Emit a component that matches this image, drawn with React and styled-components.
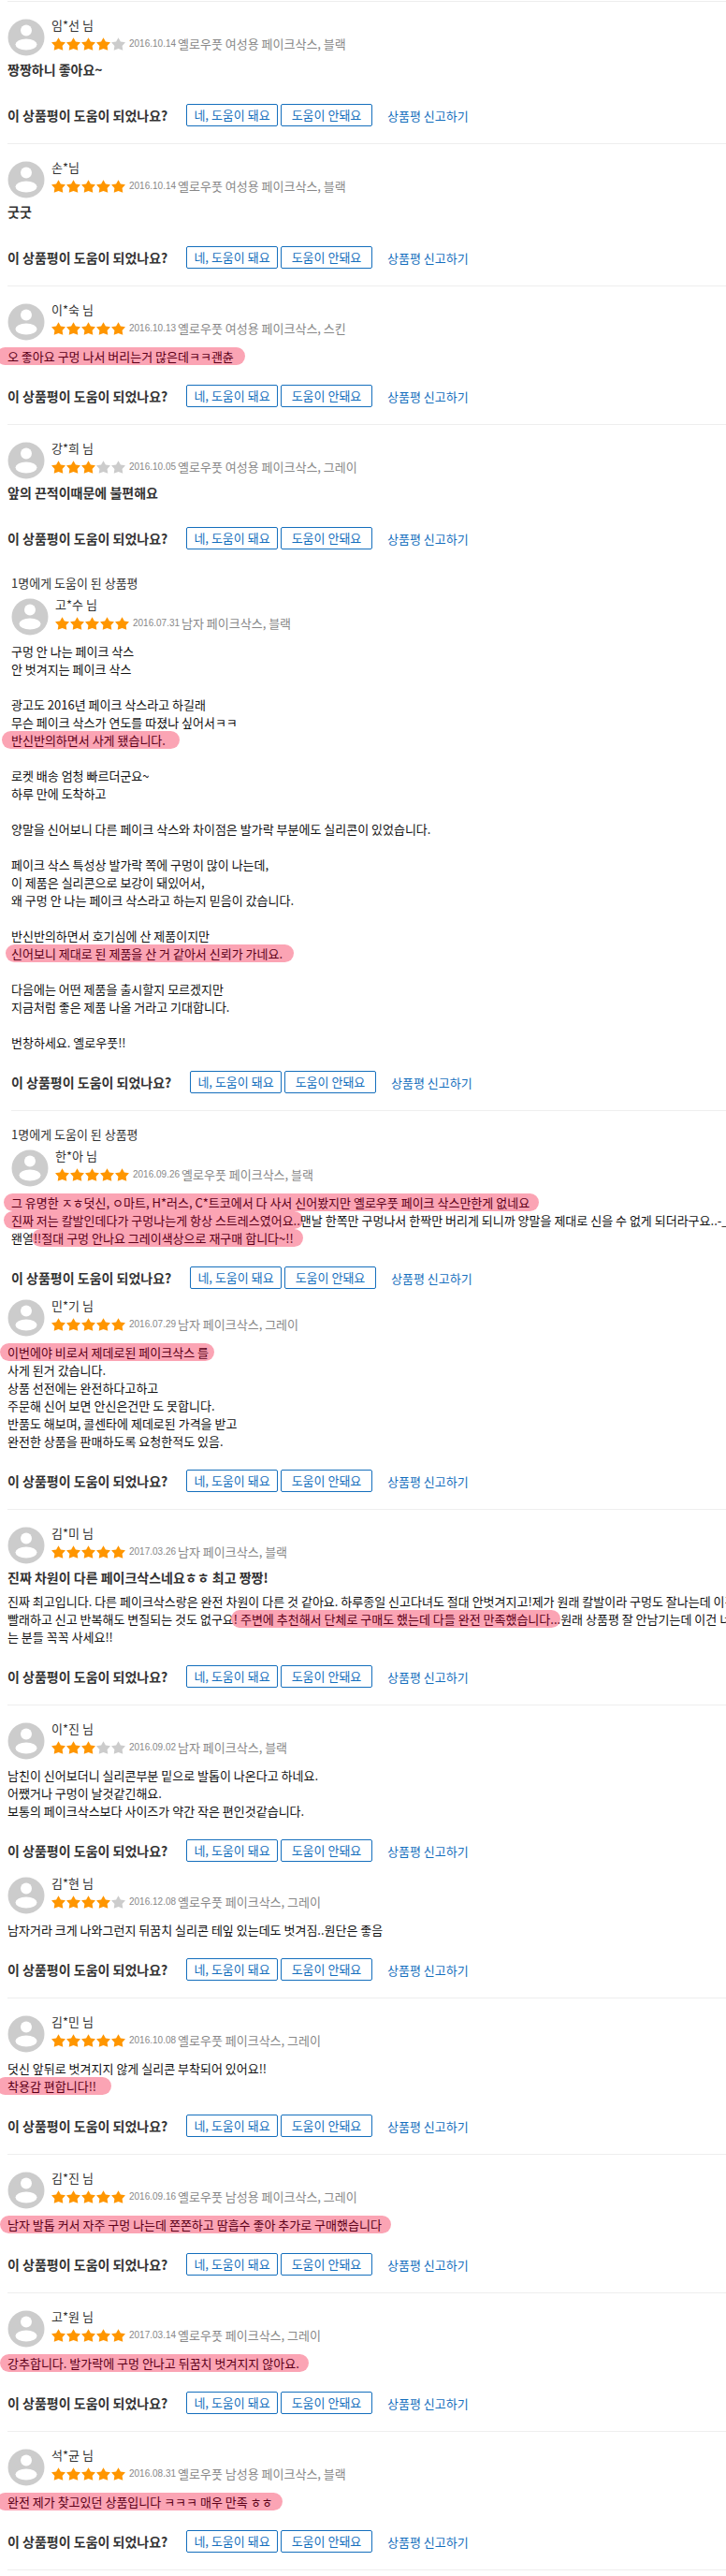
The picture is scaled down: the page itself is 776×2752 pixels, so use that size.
import styled, { createGlobalStyle, css } from "styled-components";

const GlobalStyle = createGlobalStyle`
  body {
    margin: 0;
    background: #fff;
    color: #111;
    font-family: "Noto Sans CJK KR", "Noto Sans", sans-serif;
    font-size: 13px;
    line-height: 19px;
    overflow-x: hidden;
  }
`;

const Page = styled.main`
  padding: 1px 0 6px;
  overflow: hidden;
`;

const Review = styled.article`
  margin-left: ${(p) => (p.$indent ? 12 : 8)}px;
  padding-top: ${(p) => p.$top}px;
  padding-bottom: ${(p) => p.$bottom}px;
  ${(p) =>
    p.$rule &&
    css`
      border-top: 1px solid #eee;
    `}
`;

const EndRule = styled.hr`
  margin: 0 0 0 8px;
  border: 0;
  border-top: 1px solid #eee;
`;

const HelpedCount = styled.p`
  margin: 0 0 7px;
  color: #333;
`;

const ReviewHeader = styled.header`
  display: flex;
  gap: 7px;
`;

const Avatar = styled.svg`
  width: 40px;
  height: 40px;
  flex: none;
`;

const Reviewer = styled.div`
  display: flex;
  flex-direction: column;
  gap: 6px;
  line-height: 14px;
  white-space: nowrap;
`;

const Name = styled.span`
  color: #333;
`;

const Meta = styled.div`
  display: flex;
  align-items: center;
  color: #888;
`;

const Stars = styled.svg`
  width: 80px;
  height: 14px;
  margin-right: 3px;
`;

const PostedDate = styled.time`
  width: 52px;
  font-family: "Liberation Sans", sans-serif;
  font-size: 10px;
`;

const Title = styled.h3`
  margin: 0;
  padding: 5px 0 6px;
  color: #333;
  font-size: 14px;
  font-weight: bold;
`;

const Content = styled.p`
  margin: ${(p) => (p.$titled ? 0 : 7)}px 0 0;
  white-space: pre;
`;

const Highlight = styled.mark`
  margin: 0 -${(p) => p.$right}px 0 -${(p) => p.$left}px;
  padding: 0 ${(p) => p.$right}px 0 ${(p) => p.$left}px;
  border-radius: 10px;
  background: #fba4b4;
  color: #5c0018;
`;

const Footer = styled.footer`
  display: flex;
  align-items: center;
  margin-top: 21px;
  white-space: nowrap;
`;

const Question = styled.strong`
  flex: 0 0 191px;
  color: #333;
  font-size: 14px;
`;

const VoteButton = styled.button`
  box-sizing: border-box;
  width: 98px;
  height: 24px;
  margin-right: 3px;
  padding: 0;
  border: 1px solid #156fbd;
  border-radius: 2px;
  background: #fff;
  color: #156fbd;
  font: inherit;
  line-height: 20px;
`;

const ReportLink = styled.a`
  margin-left: 13px;
  color: #156fbd;
  text-decoration: none;
`;

const m = (text, left = 8, right = 10) => ({ text, left, right });

const reviews = [
  {
    name: "임*선 님",
    rating: 4,
    date: "2016.10.14",
    product: "옐로우풋 여성용 페이크삭스, 블랙",
    title: "짱짱하니 좋아요~",
  },
  {
    name: "손*님",
    rating: 5,
    date: "2016.10.14",
    product: "옐로우풋 여성용 페이크삭스, 블랙",
    title: "굿굿",
  },
  {
    name: "이*숙 님",
    rating: 5,
    date: "2016.10.13",
    product: "옐로우풋 여성용 페이크삭스, 스킨",
    lines: [[m("오 좋아요 구멍 나서 버리는거 많은데ㅋㅋ괜츈", 12, 12)]],
  },
  {
    name: "강*희 님",
    rating: 3,
    date: "2016.10.05",
    product: "옐로우풋 여성용 페이크삭스, 그레이",
    title: "앞의 끈적이때문에 불편해요",
  },
  {
    name: "고*수 님",
    rating: 5,
    date: "2016.07.31",
    product: "남자 페이크삭스, 블랙",
    helped: 1,
    indent: true,
    rule: false,
    top: 8,
    lines: [
      ["구멍 안 나는 페이크 삭스"],
      ["안 벗겨지는 페이크 삭스"],
      [],
      ["광고도 2016년 페이크 삭스라고 하길래"],
      ["무슨 페이크 삭스가 연도를 따졌나 싶어서ㅋㅋ"],
      [m("반신반의하면서 사게 됐습니다.", 10, 15)],
      [],
      ["로켓 배송 엄청 빠르더군요~"],
      ["하루 만에 도착하고"],
      [],
      ["양말을 신어보니 다른 페이크 삭스와 차이점은 발가락 부분에도 실리콘이 있었습니다."],
      [],
      ["페이크 삭스 특성상 발가락 쪽에 구멍이 많이 나는데,"],
      ["이 제품은 실리콘으로 보강이 돼있어서,"],
      ["왜 구멍 안 나는 페이크 삭스라고 하는지 믿음이 갔습니다."],
      [],
      ["반신반의하면서 호기심에 산 제품이지만"],
      [m("신어보니 제대로 된 제품을 산 거 같아서 신뢰가 가네요.", 6, 12)],
      [],
      ["다음에는 어떤 제품을 출시할지 모르겠지만"],
      ["지금처럼 좋은 제품 나올 거라고 기대합니다."],
      [],
      ["번창하세요. 옐로우풋!!"],
    ],
  },
  {
    name: "한*아 님",
    rating: 5,
    date: "2016.09.26",
    product: "옐로우풋 페이크삭스, 블랙",
    helped: 1,
    indent: true,
    top: 15,
    bottom: 11,
    lines: [
      [m("그 유명한 ㅈㅎ덧신, ㅇ마트, H*러스, C*트코에서 다 사서 신어봤지만 옐로우풋 페이크 삭스만한게 없네요")],
      [
        m("진짜 저는 칼발인데다가 구멍나는게 항상 스트레스였어요..", 8, 3),
        "맨날 한쪽만 구멍나서 한짝만 버리게 되니까 양말을 제대로 신을 수 없게 되더라구요..-_-",
      ],
      ["왠열", m("!!절대 구멍 안나요 그레이색상으로 재구매 합니다~!!", 2, 10)],
    ],
  },
  {
    name: "민*기 님",
    rating: 5,
    date: "2016.07.29",
    product: "남자 페이크삭스, 그레이",
    rule: false,
    top: 0,
    lines: [
      [m("이번에야 비로서 제데로된 페이크삭스 를", 8, 6)],
      ["사게 된거 갔습니다."],
      ["상품 선전에는 완전하다고하고"],
      ["주문해 신어 보면 안신은건만 도 못합니다."],
      ["반품도 해보며, 콜센타에 제데로된 가격을 받고"],
      ["완전한 상품을 판매하도록 요청한적도 있음."],
    ],
  },
  {
    name: "김*미 님",
    rating: 5,
    date: "2017.03.26",
    product: "남자 페이크삭스, 블랙",
    title: "진짜 차원이 다른 페이크삭스네요ㅎㅎ 최고 짱짱!",
    lines: [
      ["진짜 최고입니다. 다른 페이크삭스랑은 완전 차원이 다른 것 같아요. 하루종일 신고다녀도 절대 안벗겨지고!제가 원래 칼발이라 구멍도 잘나는데 이건"],
      [
        "빨래하고 신고 반복해도 변질되는 것도 없구요",
        m("! 주변에 추천해서 단체로 구매도 했는데 다들 완전 만족했습니다...", 3, 0),
        "원래 상품평 잘 안남기는데 이건 너무",
      ],
      ["는 분들 꼭꼭 사세요!!"],
    ],
  },
  {
    name: "이*진 님",
    rating: 3,
    date: "2016.09.02",
    product: "남자 페이크삭스, 블랙",
    bottom: 16,
    lines: [
      ["남친이 신어보더니 실리콘부분 밑으로 발톱이 나온다고 하네요."],
      ["어쨌거나 구멍이 날것같긴해요."],
      ["보통의 페이크삭스보다 사이즈가 약간 작은 편인것같습니다."],
    ],
  },
  {
    name: "김*현 님",
    rating: 4,
    date: "2016.12.08",
    product: "옐로우풋 페이크삭스, 그레이",
    rule: false,
    top: 0,
    lines: [["남자거라 크게 나와그런지 뒤꿈치 실리콘 테잎 있는데도 벗겨짐..원단은 좋음"]],
  },
  {
    name: "김*민 님",
    rating: 5,
    date: "2016.10.08",
    product: "옐로우풋 페이크삭스, 그레이",
    lines: [
      ["덧신 앞뒤로 벗겨지지 않게 실리콘 부착되어 있어요!!"],
      [m("착용감 편합니다!!", 12, 16)],
    ],
  },
  {
    name: "김*진 님",
    rating: 5,
    date: "2016.09.16",
    product: "옐로우풋 남성용 페이크삭스, 그레이",
    lines: [[m("남자 발톱 커서 자주 구멍 나는데 쫀쫀하고 땀흡수 좋아 추가로 구매했습니다")]],
  },
  {
    name: "고*원 님",
    rating: 5,
    date: "2017.03.14",
    product: "옐로우풋 페이크삭스, 그레이",
    lines: [[m("강추합니다. 발가락에 구멍 안나고 뒤꿈치 벗겨지지 않아요.")]],
  },
  {
    name: "석*균 님",
    rating: 5,
    date: "2016.08.31",
    product: "옐로우풋 남성용 페이크삭스, 블랙",
    lines: [[m("완전 제가 찾고있던 상품입니다 ㅋㅋㅋ 매우 만족 ㅎㅎ", 12, 10)]],
  },
];

const Rating = ({ value }) => (
  <Stars viewBox="0 0 80 14" role="img" aria-label={`별점 ${value}점`}>
    {[0, 1, 2, 3, 4].map((i) => (
      <path
        key={i}
        transform={`translate(${i * 16} 0)`}
        d="M7.5 0.2 9.9 4.4 15 5.2 11.6 8.9 12.3 13.8 7.5 12 2.7 13.8 3.4 8.9 0 5.2 5.1 4.4Z"
        fill={i < value ? "#ff9600" : "#ccc"}
      />
    ))}
  </Stars>
);

const UserIcon = () => (
  <Avatar viewBox="0 0 40 40" aria-hidden="true">
    <circle cx="20" cy="20" r="19.5" fill="#ccc" />
    <circle cx="20" cy="12.5" r="6" fill="#fff" />
    <ellipse cx="20" cy="27.5" rx="11.5" ry="6" fill="#fff" />
  </Avatar>
);

const ReviewItem = ({
  name,
  rating,
  date,
  product,
  helped,
  title,
  lines,
  indent,
  rule = true,
  top = 18,
  bottom = 18,
}) => (
  <Review $indent={indent} $rule={rule} $top={top} $bottom={bottom}>
    {helped && <HelpedCount>{helped}명에게 도움이 된 상품평</HelpedCount>}
    <ReviewHeader>
      <UserIcon />
      <Reviewer>
        <Name>{name}</Name>
        <Meta>
          <Rating value={rating} />
          <PostedDate>{date}</PostedDate>
          <span>{product}</span>
        </Meta>
      </Reviewer>
    </ReviewHeader>
    {title && <Title>{title}</Title>}
    {lines && (
      <Content $titled={Boolean(title)}>
        {lines.map((line, i) => [
          i > 0 && "\n",
          ...line.map((part, j) =>
            typeof part === "string" ? (
              part
            ) : (
              <Highlight key={`${i}-${j}`} $left={part.left} $right={part.right}>
                {part.text}
              </Highlight>
            )
          ),
        ])}
      </Content>
    )}
    <Footer>
      <Question>이 상품평이 도움이 되었나요?</Question>
      <VoteButton type="button">네, 도움이 돼요</VoteButton>
      <VoteButton type="button">도움이 안돼요</VoteButton>
      <ReportLink href="#">상품평 신고하기</ReportLink>
    </Footer>
  </Review>
);

const App = () => (
  <>
    <GlobalStyle />
    <Page>
      {reviews.map((review) => (
        <ReviewItem key={review.name} {...review} />
      ))}
      <EndRule />
    </Page>
  </>
);

export default App;
